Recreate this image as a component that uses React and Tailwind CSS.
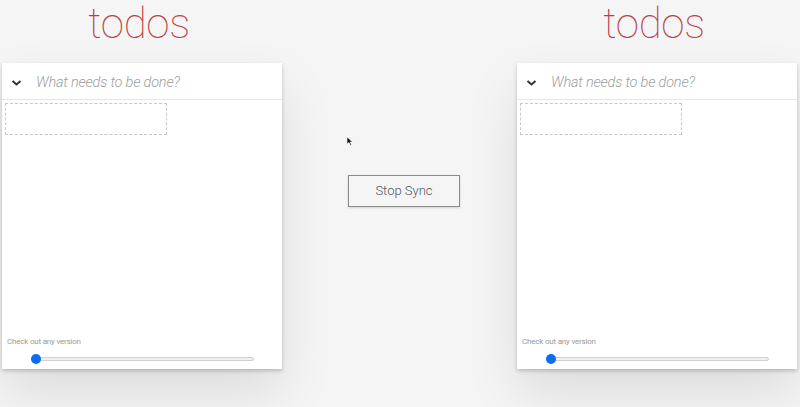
import React from "react";

const TodoPanel = () => {
  return (
    <div className="w-[280px] flex flex-col">
      <h1 className="h-[63px] flex justify-center items-start pr-[6px] text-[42px] leading-[48px] font-thin text-[#b83f45] font-['Helvetica_Neue',Roboto,sans-serif] tracking-[-0.3px]">
        todos
      </h1>
      <div className="h-[306px] bg-white flex flex-col shadow-[0_2px_4px_0_rgba(0,0,0,0.2),0_25px_50px_0_rgba(0,0,0,0.1)]">
        {/* Header input */}
        <div className="h-[37px] pt-[3px] flex items-center border-b border-[#e6e6e6]">
          <svg className="ml-[9px] mr-[14px]" width="11" height="8" viewBox="0 0 11 8">
            <polyline points="1.5,2 5.5,5.5 9.5,2" fill="none" stroke="#333" strokeWidth="2" />
          </svg>
          <span className="italic font-light text-[14.5px] text-[#9e9e9e] font-['Helvetica_Neue',Roboto,sans-serif] tracking-[-0.2px]">
            What needs to be done?
          </span>
        </div>
        {/* Empty list placeholder */}
        <div className="ml-[3px] mt-[3px] w-[162px] h-[32px] border border-dashed border-[#c8c8c8]" />
        <div className="flex-1" />
        {/* Version slider */}
        <div className="pb-[5px]">
          <p className="pl-[5px] text-[8px] text-[#999] font-['Helvetica_Neue',Roboto,sans-serif] tracking-[-0.2px]">
            Check out any version
          </p>
          <div className="relative mt-[6px] ml-[29px] w-[223px] h-[10px] flex items-center">
            <div className="w-full h-[4px] rounded-full bg-[#f0f0f0] border border-[#d0d0d0]" />
            <div className="absolute left-0 top-[0px] w-[10px] h-[10px] rounded-full bg-[#0b6cf5]" />
          </div>
        </div>
      </div>
    </div>
  );
};

export default function App() {
  return (
    <div className="relative w-[800px] h-[407px] bg-[#f5f5f5] flex overflow-hidden">
      <div className="ml-[2px]">
        <TodoPanel />
      </div>
      <div className="w-[234px] flex justify-center pt-[175px]">
        <button className="ml-[10px] w-[112px] h-[32px] bg-[#f5f5f5] border border-[#8a8a8a] text-[13px] text-[#555] font-light font-['Helvetica_Neue',Roboto,sans-serif] shadow-[0_1px_2px_rgba(0,0,0,0.15)]">
          Stop Sync
        </button>
      </div>
      <div className="ml-[1px]">
        <TodoPanel />
      </div>
      {/* mouse cursor */}
      <svg className="absolute left-[346px] top-[136px]" width="8" height="11" viewBox="0 0 8 11">
        <path d="M1 1 L1 8 L3 6.5 L4.5 9.5 L5.5 9 L4.2 6 L6.5 6 Z" fill="#111" stroke="#fff" strokeWidth="0.6" />
      </svg>
    </div>
  );
}
